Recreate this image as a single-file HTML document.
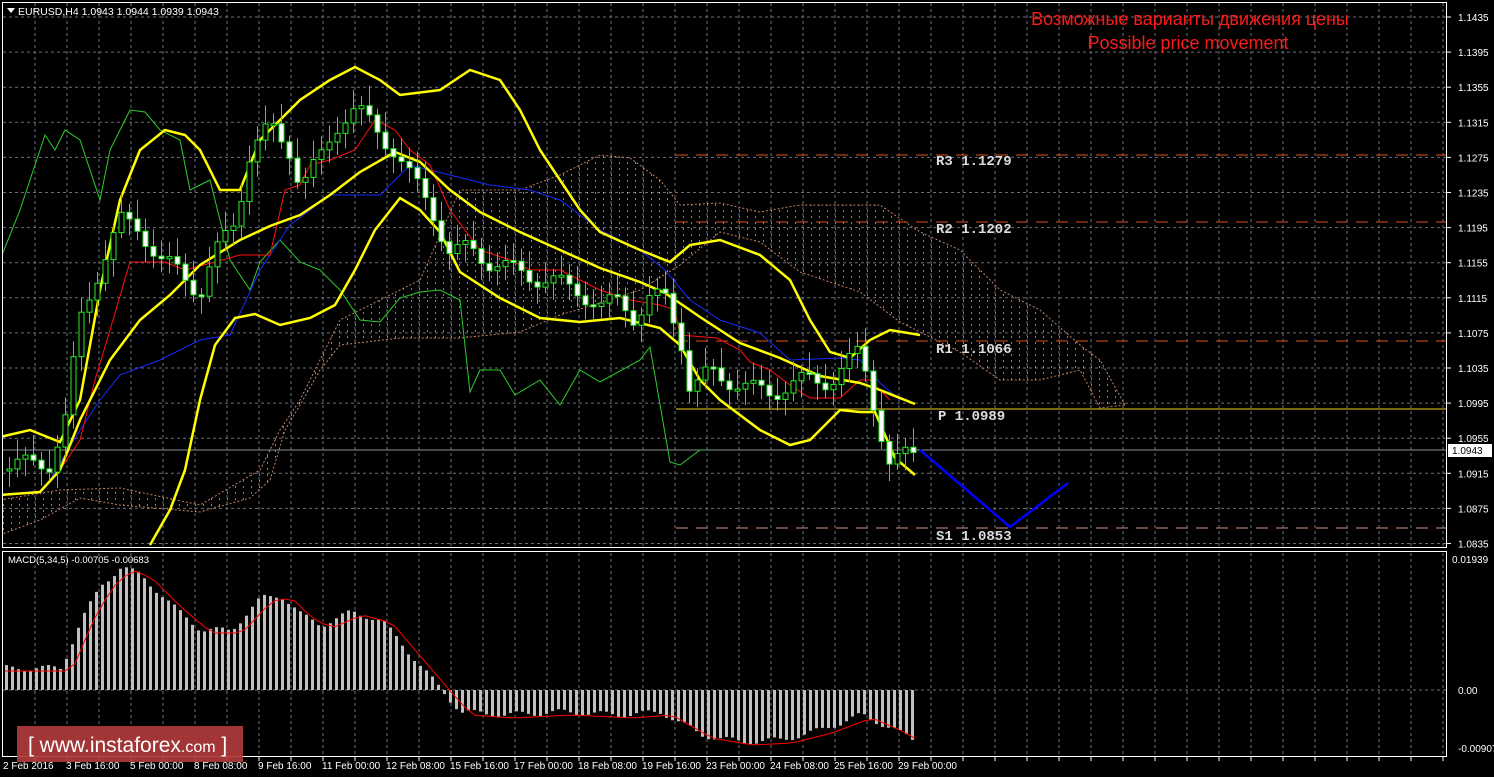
<!DOCTYPE html>
<html><head><meta charset="utf-8"><style>
html,body{margin:0;padding:0;background:#000;width:1494px;height:777px;overflow:hidden}
svg{display:block;font-family:"Liberation Sans",sans-serif}
.mono text{font-family:"Liberation Mono",monospace}
</style></head><body>
<svg id="s" width="1494" height="777" xmlns="http://www.w3.org/2000/svg">
<defs>
<pattern id="dots" width="8" height="6" patternUnits="userSpaceOnUse"><rect x="3" y="0" width="1" height="2" fill="#bbb"/></pattern>
<clipPath id="main"><rect x="3" y="3" width="1443" height="544"/></clipPath>
<clipPath id="sub"><rect x="3" y="552" width="1443" height="204"/></clipPath>
</defs>
<g id="grid"></g>
<g clip-path="url(#main)">
<polygon id="cloud" fill="url(#dots)" opacity="0.7"/>
<polyline id="cu" fill="none" stroke="#c08060" stroke-width="1" stroke-dasharray="2,2"/>
<polyline id="cl" fill="none" stroke="#c08060" stroke-width="1" stroke-dasharray="2,2"/>
<line x1="676" y1="155" x2="1446" y2="155" stroke="#e0501a" stroke-dasharray="12,8"/>
<line x1="676" y1="222" x2="1446" y2="222" stroke="#e0501a" stroke-dasharray="12,8"/>
<line x1="676" y1="341" x2="1446" y2="341" stroke="#e0501a" stroke-dasharray="12,8"/>
<line x1="676" y1="409" x2="1446" y2="409" stroke="#f0d020"/>
<line x1="676" y1="528" x2="1446" y2="528" stroke="#d09080" stroke-dasharray="12,8"/>
<line x1="3" y1="450" x2="1446" y2="450" stroke="#8a8f96"/>
<g class="mono" font-size="14" fill="#ddd" font-weight="bold">
<text x="936" y="165">R3 1.1279</text><text x="936" y="233">R2 1.1202</text>
<text x="936" y="353">R1 1.1066</text><text x="938" y="420">P 1.0989</text>
<text x="936" y="540">S1 1.0853</text></g>
<polyline id="chik" fill="none" stroke="#2ecc2e" stroke-width="1"/>
<polyline id="kij" fill="none" stroke="#1a2aff" stroke-width="1"/>
<polyline id="ten" fill="none" stroke="#ff1010" stroke-width="1"/>
<polyline id="bu" fill="none" stroke="#ffff00" stroke-width="2.5"/>
<polyline id="bm" fill="none" stroke="#ffff00" stroke-width="2.5"/>
<polyline id="bl" fill="none" stroke="#ffff00" stroke-width="2.5"/>
<g id="candles"></g>
<polyline points="920,450 1010,527 1068,483" fill="none" stroke="#0000ff" stroke-width="2.5"/>
</g>
<g clip-path="url(#sub)"><g id="hist"></g><polyline id="sig" fill="none" stroke="#ff0000" stroke-width="1"/></g>
<rect x="2.5" y="2.5" width="1444" height="545" fill="none" stroke="#fff"/>
<rect x="2.5" y="551.5" width="1444" height="205" fill="none" stroke="#fff"/>
<polygon points="7,8 15,8 11,13" fill="#fff"/>
<text x="18" y="15" font-size="10.5" fill="#fff">EURUSD,H4  1.0943 1.0944 1.0939 1.0943</text>
<text x="8" y="563" font-size="9.5" fill="#fff">MACD(5,34,5) -0.00705 -0.00683</text>
<text x="1190" y="25" font-size="18" fill="#ff1a1a" text-anchor="middle">Возможные варианты движения цены</text>
<text x="1188" y="49" font-size="18" fill="#ff1a1a" text-anchor="middle">Possible price movement</text>
<g id="ax" font-size="10" fill="#fff"></g>
<rect x="1448" y="444" width="44" height="13" fill="#fff"/>
<text x="1452" y="454" font-size="10" fill="#000">1.0943</text>
<text x="1452" y="563" font-size="10" fill="#fff">0.01939</text>
<text x="1458" y="694" font-size="10" fill="#fff">0.00</text>
<text x="1458" y="752" font-size="10" fill="#fff">-0.00907</text>
<g font-size="10" fill="#fff">
<text x="3" y="769">2 Feb 2016</text><text x="66" y="769">3 Feb 16:00</text><text x="130" y="769">5 Feb 00:00</text>
<text x="194" y="769">8 Feb 08:00</text><text x="258" y="769">9 Feb 16:00</text><text x="322" y="769">11 Feb 00:00</text>
<text x="386" y="769">12 Feb 08:00</text><text x="450" y="769">15 Feb 16:00</text><text x="514" y="769">17 Feb 00:00</text>
<text x="578" y="769">18 Feb 08:00</text><text x="642" y="769">19 Feb 16:00</text><text x="706" y="769">23 Feb 00:00</text>
<text x="770" y="769">24 Feb 08:00</text><text x="834" y="769">25 Feb 16:00</text><text x="898" y="769">29 Feb 00:00</text></g>
<rect x="17" y="726" width="226" height="36" fill="#b03a3a" opacity="0.92"/>
<text x="28" y="752" font-size="21" fill="#fff">[ www.instaforex<tspan font-size="16">.com</tspan> ]</text>
</svg>
<script>
(function(){
var NS="http://www.w3.org/2000/svg";
function el(t,a,p){var e=document.createElementNS(NS,t);for(var k in a)e.setAttribute(k,a[k]);document.getElementById(p).appendChild(e);return e;}
function pts(a){var s=[];for(var i=0;i<a.length;i+=2)s.push(a[i]+","+a[i+1]);return s.join(" ");}
function interp(a,x){if(x<=a[0])return a[1];for(var i=0;i<a.length-2;i+=2){if(x<=a[i+2]){var t=(x-a[i])/(a[i+2]-a[i]);return a[i+1]+t*(a[i+3]-a[i+1]);}}return a[a.length-1];}
for(var x=35;x<1446;x+=32){el("line",{x1:x,y1:3,x2:x,y2:547,stroke:"#6a7078","stroke-dasharray":"3,3"},"grid");el("line",{x1:x,y1:553,x2:x,y2:756,stroke:"#6a7078","stroke-dasharray":"3,3"},"grid");el("line",{x1:x,y1:757,x2:x,y2:761,stroke:"#fff"},"grid");}
var labs=["1.1435","1.1395","1.1355","1.1315","1.1275","1.1235","1.1195","1.1155","1.1115","1.1075","1.1035","1.0995","1.0955","1.0915","1.0875","1.0835"];
for(var i=0;i<16;i++){var y=17+i*35.1;el("line",{x1:3,y1:y,x2:1446,y2:y,stroke:"#6a7078","stroke-dasharray":"3,3"},"grid");el("line",{x1:1447,y1:y,x2:1451,y2:y,stroke:"#fff"},"grid");var tx=el("text",{x:1458,y:y+4},"ax");tx.textContent=labs[i];}
el("line",{x1:3,y1:690,x2:1446,y2:690,stroke:"#6a7078","stroke-dasharray":"3,3"},"grid");
var cu=[0,500,60,490,120,488,200,505,260,470,280,430,300,400,320,360,340,320,380,300,420,280,460,190,520,190,560,175,600,155,630,158,660,180,680,205,720,203,760,212,800,205,880,205,920,232,960,250,1000,290,1040,310,1080,345,1100,360,1125,405];
var cl=[0,535,40,520,80,498,120,505,200,512,250,498,270,480,285,430,300,405,320,370,340,345,400,338,460,338,520,332,560,315,600,303,640,290,680,265,720,232,760,242,800,272,860,292,900,322,960,352,1000,380,1040,380,1080,370,1100,408,1125,405];
document.getElementById("cu").setAttribute("points",pts(cu));
document.getElementById("cl").setAttribute("points",pts(cl));
var poly=pts(cu);for(var i=cl.length-2;i>=0;i-=2)poly+=" "+cl[i]+","+cl[i+1];
document.getElementById("cloud").setAttribute("points",poly);
document.getElementById("chik").setAttribute("points",pts([0,260,20,210,45,135,55,150,65,130,80,140,100,200,110,150,130,110,145,112,160,130,180,140,190,190,210,180,230,260,250,290,260,262,280,240,300,262,320,270,340,290,360,320,380,322,400,298,420,292,440,290,460,300,470,392,480,370,500,370,515,395,540,380,560,405,580,370,600,382,640,360,650,347,670,462,680,465,700,450,705,450]));
document.getElementById("ten").setAttribute("points",pts([60,470,80,440,95,380,110,330,130,262,165,262,185,270,215,262,240,255,270,255,285,190,300,185,310,165,330,160,355,150,375,120,395,130,410,150,430,165,450,210,480,250,510,260,530,270,560,270,580,280,600,290,630,300,660,305,675,310,680,335,717,338,740,350,750,362,770,370,790,385,810,398,840,398,860,380,870,380,890,400]));
document.getElementById("kij").setAttribute("points",pts([50,480,80,430,100,400,120,375,160,360,200,340,230,335,260,270,290,225,330,195,380,195,410,165,450,175,490,185,530,190,560,200,600,230,640,250,665,270,690,300,720,320,760,333,790,360,840,358,860,360,880,383,900,400]));
document.getElementById("bu").setAttribute("points",pts([0,437,30,430,60,442,80,400,100,290,120,200,140,150,165,130,185,135,200,150,220,190,240,190,260,140,300,100,330,80,355,67,380,80,400,95,440,90,470,70,500,80,520,110,540,150,560,180,580,210,600,232,640,250,670,262,690,245,720,240,760,255,790,280,810,320,830,352,850,358,870,340,890,330,920,335]));
document.getElementById("bm").setAttribute("points",pts([0,495,40,492,60,470,80,420,110,360,140,320,170,295,200,265,240,240,270,226,300,215,330,195,360,172,395,152,420,162,450,190,480,212,520,232,560,250,600,268,640,282,665,293,700,317,740,343,780,358,820,376,860,383,880,390,915,404]));
document.getElementById("bl").setAttribute("points",pts([150,545,170,510,185,470,200,400,215,345,235,318,255,314,280,325,310,318,335,305,355,270,375,230,400,198,420,210,440,232,460,272,500,298,540,318,580,322,620,318,660,328,680,345,700,380,720,400,760,430,790,445,810,440,840,410,860,412,875,412,895,458,915,475]));
var cp=[5,465,30,465,50,462,65,420,80,320,100,265,120,222,140,228,160,262,180,272,200,292,215,255,235,220,250,150,270,128,290,150,300,185,320,160,340,118,355,108,375,130,395,150,410,178,430,205,450,255,470,248,490,262,510,270,530,275,550,282,580,290,600,310,620,298,635,318,650,300,665,298,680,335,690,392,710,372,730,380,750,390,770,392,790,385,810,380,830,380,845,368,860,350,868,380,880,430,890,470,905,455,915,450];
var prev=470;
for(var x=9;x<=913;x+=8){var c=interp(cp,x)+Math.sin(x*1.7)*10;var o=prev;prev=c;var tp=Math.min(o,c),h=Math.max(2,Math.abs(o-c));var bear=c>o;
el("line",{x1:x+0.5,y1:tp-6-Math.abs(Math.sin(x))*14,x2:x+0.5,y2:tp+h+5+Math.abs(Math.cos(x))*12,stroke:"#22ee22"},"candles");
el("rect",{x:x-2,y:tp,width:5,height:h,fill:bear?"#fff":"#000",stroke:"#22ee22","stroke-width":1},"candles");}
var mp=[5,668,60,668,80,620,100,585,120,567,140,575,170,605,200,630,230,630,260,598,280,595,300,615,320,625,350,612,380,620,410,655,440,690,460,712,500,715,560,712,620,715,660,712,700,735,740,742,780,740,820,730,860,715,890,728,915,742];
for(var x=5;x<=915;x+=6){var y=interp(mp,x)+Math.sin(x*0.9)*3;var t2=Math.min(y,690),h2=Math.abs(690-y);el("rect",{x:x,y:t2,width:3,height:Math.max(h2,1),fill:"#c0c0c0"},"hist");}
var sp=[];for(var x=5;x<=915;x+=10){sp.push(x,interp(mp,x-12)+3);}
document.getElementById("sig").setAttribute("points",pts(sp));
})();
</script>
</body></html>
